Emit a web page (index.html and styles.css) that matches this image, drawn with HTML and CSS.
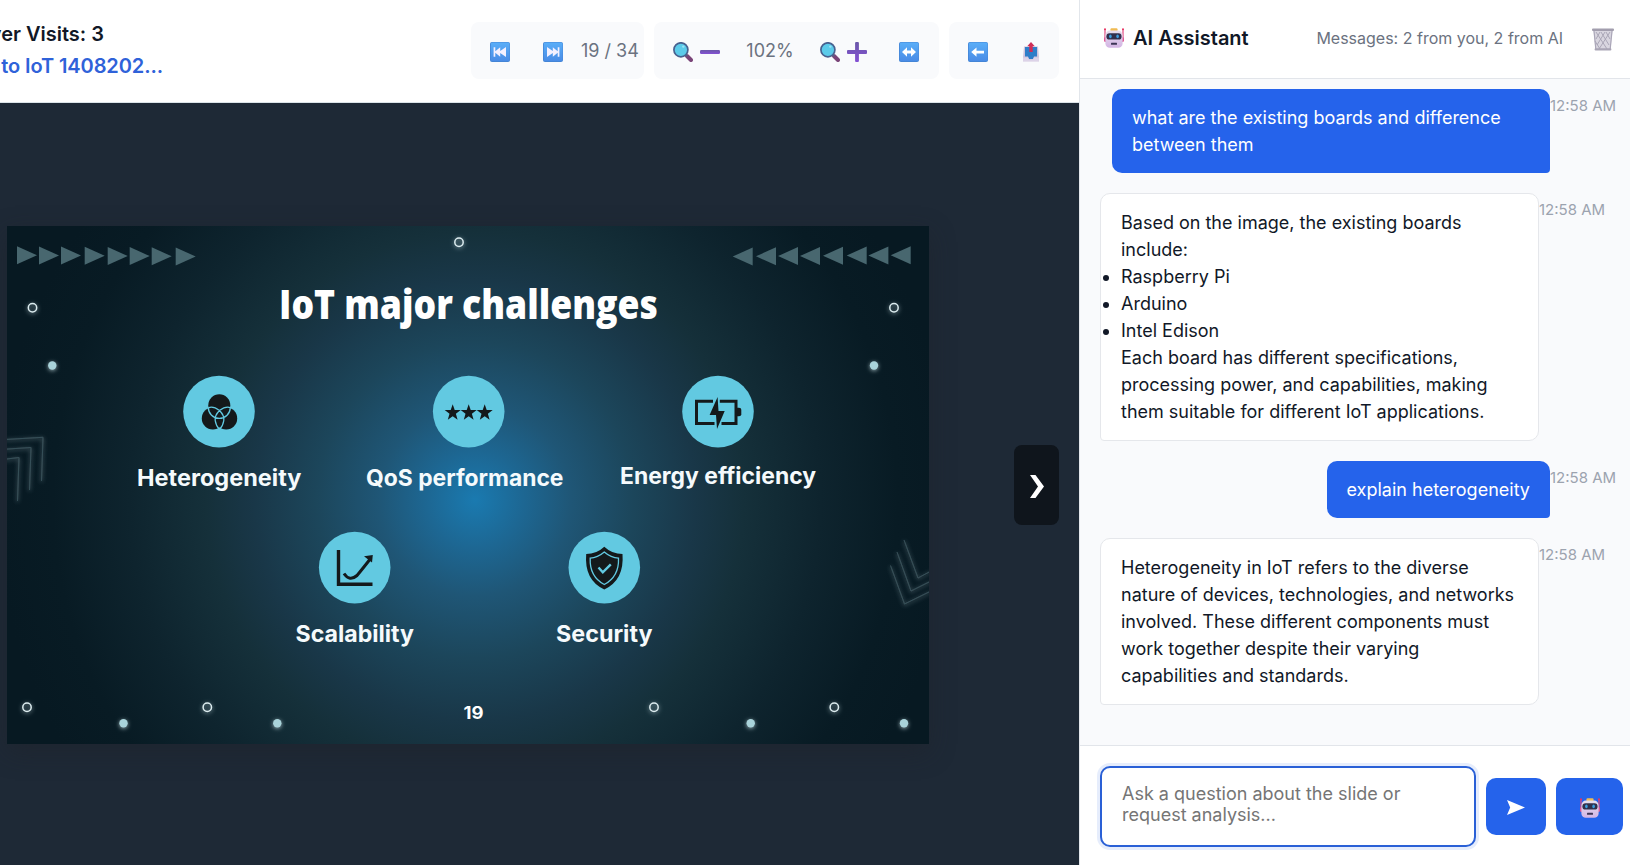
FILE: index.html
```html
<!DOCTYPE html>
<html lang="en">
<head>
<meta charset="utf-8">
<title>Lecture Viewer</title>
<link rel="stylesheet" href="styles.css">
</head>
<body>
<svg class="defs" aria-hidden="true">
  <defs>
    <linearGradient id="key" x1="0" y1="0" x2="0" y2="1"><stop offset="0" stop-color="#5aaef8"/><stop offset="1" stop-color="#4a8ce6"/></linearGradient>
    <linearGradient id="violet" x1="0" y1="0" x2="0" y2="1"><stop offset="0" stop-color="#6a58a8"/><stop offset="1" stop-color="#8450d4"/></linearGradient>
    <linearGradient id="face" x1="0" y1="0" x2="0" y2="1"><stop offset="0" stop-color="#e6dfee"/><stop offset="1" stop-color="#d3b4e4"/></linearGradient>
    <symbol id="keycap" viewBox="0 0 20 20">
      <rect width="20" height="20" rx="2" fill="#4485d6"/><rect x=".8" y=".4" width="18.8" height="18.6" rx="1.6" fill="url(#key)"/>
    </symbol>
    <symbol id="lens" viewBox="0 0 20 20">
      <path d="M14 14l4 4" stroke="#7a4478" stroke-width="4" stroke-linecap="round"/>
      <path d="M11.8 11.8l2.4 2.4" stroke="#5a5f80" stroke-width="2"/>
      <circle cx="7.9" cy="7.8" r="7" fill="#5ccbea" stroke="#48618f" stroke-width="1.7"/>
      <circle cx="10.3" cy="4.6" r="1.2" fill="#9be4f5"/>
    </symbol>
    <symbol id="robot" viewBox="0 0 20 20">
      <path d="M1 1v11M19 1v11" stroke="#e2487e" stroke-width="1.2"/>
      <circle cx="1" cy="1.2" r="1" fill="#e8325f"/><circle cx="19" cy="1.2" r="1" fill="#e8325f"/>
      <rect x="0" y="9" width="20" height="5" rx="1.6" fill="#dc5a94"/>
      <rect x="6.5" y=".2" width="7" height="4" rx="1" fill="#f0bb52"/>
      <rect x="1.4" y="2.6" width="17.2" height="17.2" rx="4.4" fill="url(#face)"/>
      <rect x="2.4" y="5.2" width="15.2" height="6.4" rx="3.2" fill="#30304c"/>
      <ellipse cx="6.4" cy="8.4" rx="1.3" ry="1.8" fill="#3b9ee0"/><ellipse cx="13.6" cy="8.4" rx="1.3" ry="1.8" fill="#3b9ee0"/>
      <rect x="7" y="14.8" width="6" height="2" rx=".5" fill="#3c3556"/>
    </symbol>
  </defs>
</svg>
<div class="app">
  <main class="viewer">
    <header class="viewer-header">
      <div class="titles">
        <div class="visits">ver Visits: 3</div>
        <div class="deck">to IoT 1408202...</div>
      </div>
      <div class="toolbar">
        <div class="group group-pages">
          <button class="tool"><svg class="icon" viewBox="0 0 20 20"><use href="#keycap"/><path d="M3.600 5.200h1.700v4l4.900-4v3.900l5.800-4v9.800l-5.800-4v3.900l-4.900-4v4H3.600z" fill="#f4f0ff"/></svg></button>
          <button class="tool"><svg class="icon" viewBox="0 0 20 20"><use href="#keycap"/><path d="M16.400 5.200h-1.700v4l-4.900-4v3.900l-5.800-4v9.800l5.800-4v3.900l4.900-4v4h1.700z" fill="#f4f0ff"/></svg></button>
          <span class="label">19 / 34</span>
        </div>
        <div class="group group-zoom">
          <button class="tool wide"><svg class="icon" viewBox="0 0 20 20"><use href="#lens"/></svg><svg class="icon" viewBox="0 0 20 20"><rect y="8" width="20" height="4" rx="1.2" fill="url(#violet)"/></svg></button>
          <span class="label zoom">102%</span>
          <button class="tool wide"><svg class="icon" viewBox="0 0 20 20"><use href="#lens"/></svg><svg class="icon" viewBox="0 0 20 20"><path d="M8.100 1q0-1 1-1h1.800q1 0 1 1v7h7.100q1 0 1 1v2q0 1-1 1h-7.100v7q0 1-1 1H9.100q-1 0-1-1v-7H1q-1 0-1-1V9q0-1 1-1h7.100z" fill="url(#violet)"/></svg></button>
          <button class="tool"><svg class="icon" viewBox="0 0 20 20"><use href="#keycap"/><path d="M3 10l5-4.800v3.400h4V5.200l5 4.800-5 4.800v-3.400H8v3.400z" fill="#fff"/></svg></button>
        </div>
        <div class="group group-actions">
          <button class="tool"><svg class="icon" viewBox="0 0 20 20"><use href="#keycap"/><path d="M3.200 10l5.300-4.600v3.300H16v2.700H8.500v3.300z" fill="#fff"/></svg></button>
          <button class="tool"><svg class="icon" viewBox="0 0 20 20"><path d="M3 4.500h14l1 11v3.800H2v-3.800z" fill="#cdc3dc"/><path d="M4 5h12v9.500h-3L12 17H8l-1-2.500H4z" fill="#2e7dc8"/><path d="M2 15.500h5L8 17.500h4l1-2h5v4H2z" fill="#ddd3e8"/><path d="M10 0l3.800 4.300h-2.100V10H8.300V4.300H6.200z" fill="#cf2e58"/></svg></button>
        </div>
      </div>
    </header>
    <section class="stage">
      <svg class="slide" viewBox="7 226 922 518">
        <defs>
          <radialGradient id="glow" gradientUnits="userSpaceOnUse" cx="475" cy="500" r="480">
            <stop offset="0" stop-color="#1a7ab0"/><stop offset=".1" stop-color="#1d6793"/><stop offset=".2" stop-color="#1f5676"/>
            <stop offset=".33" stop-color="#1c465b"/><stop offset=".46" stop-color="#193748"/><stop offset=".56" stop-color="#15303a"/>
            <stop offset=".72" stop-color="#0e242e"/><stop offset=".88" stop-color="#081b24"/><stop offset="1" stop-color="#071922"/>
          </radialGradient>
          <filter id="halo" x="-100%" y="-100%" width="300%" height="300%"><feDropShadow dx="0" dy="1" stdDeviation="2" flood-color="#cfe8ee" flood-opacity=".7"/></filter>
          <path id="tri" d="M0-9L20 0 0 9z"/>
          <path id="star" d="M0-8.200L2-2.600 8-2.600 3.200 1.200 4.900 7.200 0 3.700-4.900 7.200-3.200 1.200-8-2.600-2-2.600z"/>
        </defs>
        <rect x="7" y="226" width="922" height="518" fill="url(#glow)"/>
        <g fill="#48676f">
          <use href="#tri" x="17" y="255.300"/><use href="#tri" x="39" y="255.400"/><use href="#tri" x="61" y="255.600"/><use href="#tri" x="84.700" y="255.700"/>
          <use href="#tri" x="107.700" y="255.900"/><use href="#tri" x="129.700" y="256.100"/><use href="#tri" x="151.700" y="256.300"/><use href="#tri" x="175.700" y="256.500"/>
        </g>
        <g fill="#48676f" transform="translate(928 0) scale(-1 1)">
          <use href="#tri" x="17.300" y="255.300"/><use href="#tri" x="39.600" y="255.400"/><use href="#tri" x="61.300" y="255.600"/><use href="#tri" x="85" y="255.700"/>
          <use href="#tri" x="108" y="255.900"/><use href="#tri" x="130" y="256.100"/><use href="#tri" x="152" y="256.300"/><use href="#tri" x="175.300" y="256.500"/>
        </g>
        <g fill="none" stroke="#dcecef" stroke-width="1.500" filter="url(#halo)">
          <circle cx="459" cy="242.300" r="4.200"/><circle cx="32.500" cy="307.800" r="4.200"/><circle cx="894" cy="307.800" r="4.200"/>
          <circle cx="27" cy="707.300" r="4.200"/><circle cx="207.300" cy="707.300" r="4.200"/><circle cx="654" cy="707.300" r="4.200"/><circle cx="834.300" cy="707.300" r="4.200"/>
        </g>
        <g fill="#a9d3da" filter="url(#halo)">
          <circle cx="52.300" cy="365.500" r="4.200"/><circle cx="874" cy="365.500" r="4.200"/>
          <circle cx="123.500" cy="723.300" r="4.200"/><circle cx="277.300" cy="723.300" r="4.200"/><circle cx="750.700" cy="723.300" r="4.200"/><circle cx="904" cy="723.300" r="4.200"/>
        </g>
        <g fill="none" stroke="#415d66" stroke-width="1" filter="url(#halo)" opacity=".8">
          <path d="M5 439.500L43 437.300 41.500 481"/><path d="M5 449.200L31 447.500 29.500 490"/><path d="M5 459.200L19 457.500 17.500 501"/>
          <path d="M904 540L918 578 931 571"/><path d="M897 552L911 591 931 581"/><path d="M890.500 565.500L904.500 604 931 591"/>
        </g>
        <text class="slide-title" x="279" y="318.500" textLength="379" lengthAdjust="spacingAndGlyphs">IoT major challenges</text>
        <g fill="#62c9e1">
          <circle cx="219" cy="411.600" r="35.800"/><circle cx="468.700" cy="411.600" r="35.800"/><circle cx="718" cy="411.600" r="35.800"/>
          <circle cx="354.700" cy="567.600" r="35.800"/><circle cx="604.300" cy="567.600" r="35.800"/>
        </g>
        <g fill="#14191b">
          <circle cx="219.300" cy="405.200" r="11"/><circle cx="212.800" cy="418.400" r="11"/><circle cx="226.200" cy="418.400" r="11"/>
        </g>
        <g fill="none" stroke="#62c9e1" stroke-width="1.300">
          <path d="M208.300 407.400A11 11 0 0 0 230.300 407.400M208.500 407.800Q213 405.800 219.500 410.500Q224.500 415.500 223.800 420.500Q223 426 219.500 429.400M230.500 407.800Q226 405.800 219.500 410.500Q214.500 415.500 215.200 420.500Q216 426 219.500 429.400"/>
        </g>
        <g fill="#14191b"><use href="#star" x="452.700" y="412.500"/><use href="#star" x="468.700" y="412.500"/><use href="#star" x="484.700" y="412.500"/></g>
        <g fill="#14191b">
          <path d="M736.800 407.800h2.200q2.300 0 2.300 2v4.500q0 2-2.300 2h-2.200z"/>
          <path d="M713 401.300H696.500V423.500H714.500M719.800 401.300H736V423.500H721.500" fill="none" stroke="#14191b" stroke-width="3"/>
          <path d="M717.600 397l-8 18h6.400l1 14 7.700-18h-6.200z"/>
        </g>
        <g fill="none" stroke="#14191b">
          <path d="M338.500 550v34.300H372.500" stroke-width="3.400"/>
          <path d="M344 573.500Q349.500 582 357 575.500Q362 569.500 371 558" stroke-width="3"/>
          <path d="M364 556.300L372.800 555 372 562.500z" fill="#14191b" stroke="none"/>
        </g>
        <path d="M604.300 546.700Q612 554 622.500 554Q624.500 580 604.300 589.500Q584 580 586.200 554Q596.500 554 604.300 546.700z" fill="#14191b"/>
        <path d="M604.300 552Q611 557.800 618.500 558.200Q619.200 576.500 604.300 584.500Q589.400 576.500 590.200 558.200Q597.500 557.800 604.300 552z" fill="none" stroke="#62c9e1" stroke-width="1.300"/>
        <path d="M598.500 567.500l4.300 4.800 8-8" fill="none" stroke="#62c9e1" stroke-width="2.400"/>
        <g class="slide-label">
          <text x="137" y="485.800" textLength="164.500" lengthAdjust="spacingAndGlyphs">Heterogeneity</text>
          <text x="366" y="485.800" textLength="197.500" lengthAdjust="spacingAndGlyphs">QoS performance</text>
          <text x="620" y="483.500" textLength="196" lengthAdjust="spacingAndGlyphs">Energy efficiency</text>
          <text x="295.500" y="641.800" textLength="118.500" lengthAdjust="spacingAndGlyphs">Scalability</text>
          <text x="556" y="641.800" textLength="96.500" lengthAdjust="spacingAndGlyphs">Security</text>
        </g>
        <text class="slide-number" x="463.500" y="719" textLength="20" lengthAdjust="spacingAndGlyphs">19</text>
      </svg>
      <button class="next"><svg class="next-icon" viewBox="0 0 14 23"><path d="M0 0h5.500L14 11.500 5.500 23H0l8-11.500z" fill="#fff"/></svg></button>
    </section>
  </main>
  <aside class="chat">
    <header class="chat-header">
      <svg class="bot" viewBox="0 0 20 20"><use href="#robot"/></svg>
      <h2 class="chat-title">AI Assistant</h2>
      <span class="count">Messages: 2 from you, 2 from AI</span>
      <svg class="trash" viewBox="0 0 22 23">
        <path d="M1.500 2.500h19L18.500 22h-15z" fill="#d9d6e0"/>
        <path d="M4 4l11 17M9 4l8 13M14 4l4 7M18 4L7 21M13 4L5 17M8 4L4 11M3 13l5 8" stroke="#a5a2b2" stroke-width=".9" fill="none"/>
        <path d="M2 3l1.800 18M20 3l-1.800 18" stroke="#aaa6b8" stroke-width="1.200"/>
        <rect x="0" y=".5" width="22" height="2.600" rx="1" fill="#a29eae"/><rect x="2.600" y="20.300" width="16.800" height="2.200" rx="1" fill="#a9a5b5"/>
      </svg>
    </header>
    <section class="messages">
      <div class="message user"><div class="bubble">what are the existing boards and difference between them</div><time class="time">12:58 AM</time></div>
      <div class="message"><div class="bubble">Based on the image, the existing boards include:
        <ul class="list"><li>Raspberry Pi</li><li>Arduino</li><li>Intel Edison</li></ul>
        Each board has different specifications, processing power, and capabilities, making them suitable for different IoT applications.</div><time class="time">12:58 AM</time></div>
      <div class="message user"><div class="bubble">explain heterogeneity</div><time class="time">12:58 AM</time></div>
      <div class="message"><div class="bubble">Heterogeneity in IoT refers to the diverse nature of devices, technologies, and networks involved. These different components must work together despite their varying capabilities and standards.</div><time class="time">12:58 AM</time></div>
    </section>
    <footer class="composer">
      <textarea class="prompt" placeholder="Ask a question about the slide or request analysis..."></textarea>
      <button class="send"><svg class="send-icon" viewBox="0 0 18 15"><path d="M0 0l18 7.500L0 15l3.200-7.500z" fill="#fff"/></svg></button>
      <button class="send analyze"><svg class="icon" viewBox="0 0 20 20"><use href="#robot"/></svg></button>
    </footer>
  </aside>
</div>
</body>
</html>
```
FILE: styles.css
```css
* { box-sizing: border-box; }
body { margin: 0; font-family: Inter, "Liberation Sans", sans-serif; font-size: 18px; color: #111827; overflow: hidden; }
button { border: 0; padding: 0; font: inherit; background: none; display: flex; align-items: center; justify-content: center; }
.defs { position: absolute; width: 0; height: 0; }
.app { display: grid; grid-template-columns: 1080px 550px; height: 865px; }

.viewer { display: flex; flex-direction: column; border-right: 1px solid #e2e6eb; min-width: 0; }
.viewer-header { height: 103px; border-bottom: 1px solid #dbe3e8; background: #fff; display: flex; align-items: center; justify-content: space-between; padding: 0 20px 1px 0; }
.titles { display: flex; flex-direction: column; gap: 4px; font-size: 20px; line-height: 28px; white-space: nowrap; margin-top: -2px; }
.visits { width: 104px; display: flex; justify-content: flex-end; font-weight: 600; }
.deck { width: 163px; display: flex; justify-content: flex-end; font-weight: 600; letter-spacing: -.1px; color: #2f62d9; }
.toolbar { display: flex; gap: 10px; }
.group { height: 57px; border-radius: 8px; background: #f9fafc; display: flex; align-items: center; }
.group-pages { width: 173px; padding-left: 2px; }
.group-zoom { width: 285px; padding-left: 4px; }
.group-actions { width: 110px; padding-left: 2px; }
.tool { width: 53px; height: 40px; gap: 7px; padding-top: 3px; flex: none; }
.tool.wide { width: 77px; }
.icon { width: 20px; height: 20px; flex: none; }
.label { color: #6b7280; white-space: nowrap; margin: -1px 0 0 2px; }
.zoom { width: 70px; text-align: center; margin-left: 0; }

.stage { flex: 1; background: #1e2936; display: flex; align-items: center; justify-content: space-between; padding: 2px 20px 0 7px; }
.slide { width: 922px; height: 518px; display: block; box-shadow: 0 8px 24px rgba(30, 34, 40, .45); }
.slide-title { font: 800 40px "Open Sans", sans-serif; fill: #fff; }
.slide-label { font: 650 23px Inter, sans-serif; fill: #f5fafc; }
.slide-number { font: 700 17px Inter, sans-serif; fill: #fff; }
.next { width: 45px; height: 80px; border-radius: 8px; background: #0f151c; }
.next-icon { width: 14px; height: 23px; margin: 2px 0 0 1px; }

.chat { display: flex; flex-direction: column; background: #f9fafc; min-width: 0; }
.chat-header { height: 79px; border-bottom: 1px solid #e2e5ea; background: #fff; display: flex; align-items: center; padding: 0 16px 3px 24px; }
.bot { width: 20px; height: 20px; }
.chat-title { margin: 0 auto 0 9px; font-size: 20px; font-weight: 600; }
.count { font-size: 16px; color: #6b7280; margin-right: 29px; }
.trash { width: 22px; height: 23px; margin-top: 4px; }
.messages { flex: 1; padding: 10px 0 0 20px; display: flex; flex-direction: column; gap: 20px; }
.message { display: flex; align-items: flex-start; }
.message.user { justify-content: flex-end; padding-right: 14px; }
.bubble { max-width: 439px; padding: 15px 20px; border: 1px solid #e5e7eb; border-radius: 10px 10px 10px 4px; background: #fff; line-height: 27px; }
.user .bubble { max-width: 438px; border: 0; border-radius: 10px 10px 4px 10px; background: #2563eb; color: #fff; }
.list { margin: 0; padding: 0; }
.time { font-size: 15px; line-height: 22px; color: #9ca3af; white-space: nowrap; width: 66px; padding-top: 6px; flex: none; }
.composer { height: 120px; border-top: 1px solid #e2e5ea; background: #fff; display: flex; align-items: center; gap: 10px; padding: 2px 0 0 20px; }
.prompt { width: 376px; height: 81px; resize: none; outline: 0; border: 2px solid #2a60d6; border-radius: 10px; box-shadow: 0 0 0 3px #e6edfc; padding: 15px 20px; font: 18px/21px Inter, sans-serif; background: #fff; }
.prompt::placeholder { color: #757575; }
.send { width: 60px; height: 57px; border-radius: 10px; background: #2563eb; padding-top: 2px; }
.send-icon { width: 18px; height: 15px; }
.analyze { width: 67px; }
```
